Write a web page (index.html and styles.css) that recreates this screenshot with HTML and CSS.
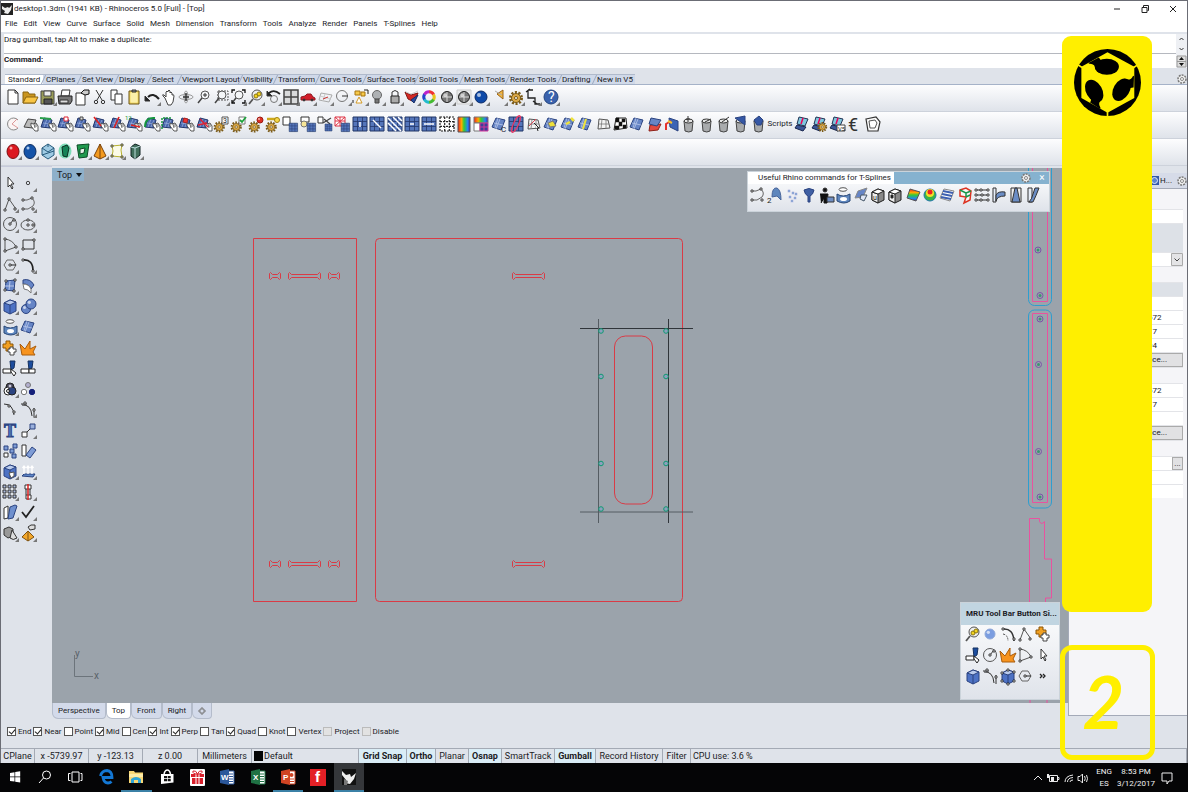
FILE: index.html
```html
<!DOCTYPE html>
<html lang="en">
<head>
<meta charset="utf-8">
<title>desktop1.3dm - Rhinoceros 5.0</title>
<link rel="stylesheet" href="styles.css">
</head>
<body>
<div class="app">
  <header class="titlebar">
    <svg class="app-icon" viewBox="0 0 12 12"><path d="M0 0h12v12H0z" fill="#222"/><path d="M1 3l3 2 3-1 1 1 3-3-1 5-3 4-4-1 1-2-3-2z" fill="#eee"/></svg>
    <h1 class="title">desktop1.3dm (1941 KB) - Rhinoceros 5.0 [Full] - [Top]</h1>
    <div class="win-buttons">
      <button type="button" aria-label="Minimize"><svg viewBox="0 0 10 10"><path d="M2 5h6" stroke="#222"/></svg></button>
      <button type="button" aria-label="Restore"><svg viewBox="0 0 10 10"><path d="M2 3.500h5v5h-5zM3.500 3V1.500h5v5H7.500" fill="none" stroke="#222"/></svg></button>
      <button type="button" aria-label="Close"><svg viewBox="0 0 10 10"><path d="M2 2l6 6M8 2l-6 6" stroke="#222"/></svg></button>
    </div>
  </header>
  <nav class="menu">
    <a href="#">File</a><a href="#">Edit</a><a href="#">View</a><a href="#">Curve</a><a href="#">Surface</a><a href="#">Solid</a><a href="#">Mesh</a><a href="#">Dimension</a><a href="#">Transform</a><a href="#">Tools</a><a href="#">Analyze</a><a href="#">Render</a><a href="#">Panels</a><a href="#">T-Splines</a><a href="#">Help</a>
  </nav>
  <section class="command">
    <div class="command-main">
      <p class="history">Drag gumball, tap Alt to make a duplicate:</p>
      <div class="prompt"><label for="cmd">Command:</label><input id="cmd" type="text"></div>
    </div>
    <svg class="command-scroll" viewBox="0 0 11 34"><path d="M0 0h11v34H0z" fill="#eef0f4"/><path d="M3.500 6l2-2 2 2M3.500 14l2 2 2-2" fill="none" stroke="#333"/><path d="M1 22h9v11H1z" fill="#ddd" stroke="#999"/><path d="M3 26h5l-2.500-3zM3 29h5l-2.500 3z" fill="#111"/><path d="M1 27.500h9" stroke="#999"/></svg>
  </section>
  <div class="tabstrip">
    <nav class="tool-tabs">
      <button type="button" class="active">Standard</button><button type="button">CPlanes</button><button type="button">Set View</button><button type="button">Display</button><button type="button">Select</button><button type="button">Viewport Layout</button><button type="button">Visibility</button><button type="button">Transform</button><button type="button">Curve Tools</button><button type="button">Surface Tools</button><button type="button">Solid Tools</button><button type="button">Mesh Tools</button><button type="button">Render Tools</button><button type="button">Drafting</button><button type="button">New in V5</button>
    </nav>
    <div class="tools" data-icons="cog"></div>
  </div>
  <div class="toolbar"><div class="tools n32" data-icons="new open save+ print props cut copy paste undo+ pan orbit zoom zoomwin+ zoomext+ zoomsel+ undoview+ four+ car+ cplane+ circ+ selpts+ bulb+ lock+ layer+ wheel+ ball+ ballgrid+ blueball+ spot+ gear+ dim+ help+"></div></div>
  <div class="toolbar">
    <div class="tools n44" data-icons="pie grayhand handgreen handsq hand handarrow handline hand12 handring handdash handdot handcross gear3 gearok gearred gearkey sqgrid bulbgrid cutgrid redgrid gridv griddiag gridhatch gridh gridhh griddots rainbow rainbowgrid patchc gridoval wirered patchy patchyy patchyl wire checker patch patchred brush bucket bucket2 bucket3 bucketb bucketd"></div>
    <button type="button" class="scripts">Scripts</button>
    <div class="tools n5" data-icons="laptop laptopgear laptopv euro penta"></div>
  </div>
  <div class="toolbar"><div class="tools n8" data-icons="eggred+ eggblue+ hexa+ greenglow+ greenbox+ cone+ yellowsq+ cyl+"></div></div>

  <main class="main">
    <aside class="palette">
      <div class="tools two" data-icons="arrow point+ polyline+ curve+ circle+ ellipse+ arc+ rect+ polygon+ fillet+ surf+ sweep+ box+ spheres+ tube+ patch2+ puzzle boom trim split group+ ungroup arcpt blend+ text move+ array join boxhole+ extrude+ nine+ align+ fold+ check+ solids+ pyramid+"></div>
    </aside>
    <div class="center">
      <div class="viewport">
        <svg class="drawing">
          <defs>
            <path id="slot" d="M1.500 .500l2 2h26l2-2 1 1v5l-1 1-2-2h-26l-2 2-1-1v-5z"/>
            <path id="knot" d="M1.500 .500l2 2h5l2-2 1 1v5l-1 1-2-2h-5l-2 2-1-1v-5z"/>
            <g id="pin"><circle r="3" fill="none" stroke="#7b55a8"/><circle r="1.500" fill="#3a9470"/></g>
            <circle id="dot" r="2.300" fill="#8d9fbd" stroke="#0e9b72"/>
          </defs>
          <g transform="translate(-52 -168)">
            <g fill="none" stroke="#d93b46">
              <path d="M253.500 238.500h103v363h-103z"/>
              <rect x="375.500" y="238.500" width="307" height="363" rx="4"/>
              <rect x="614.500" y="336" width="38" height="168" rx="11"/>
              <use href="#knot" x="269" y="272"/><use href="#slot" x="288" y="272"/><use href="#knot" x="328" y="272"/><use href="#slot" x="512" y="272"/>
              <use href="#knot" x="269" y="560"/><use href="#slot" x="288" y="560"/><use href="#knot" x="328" y="560"/><use href="#slot" x="512" y="560"/>
            </g>
            <path d="M580 328.500h113M668.500 319v204" stroke="#30353a" fill="none"/>
            <path d="M580 512h113M598.500 319v204" stroke="#555c62" fill="none"/>
            <use href="#dot" x="601" y="331"/><use href="#dot" x="601" y="376.500"/><use href="#dot" x="601" y="463.500"/><use href="#dot" x="601" y="509"/>
            <use href="#dot" x="666" y="331"/><use href="#dot" x="666" y="376.500"/><use href="#dot" x="666" y="463.500"/><use href="#dot" x="666" y="509"/>
            <g fill="none" stroke="#2d9ed0"><rect x="1028.500" y="150" width="23" height="155.500" rx="6"/><rect x="1028.500" y="310" width="23" height="198" rx="6"/></g>
            <path fill="none" stroke="#e8529f" d="M1032.500 168v133.500h15V168M1032.500 313.500h15v189h-15zM1029.500 620V518.500h10v3q2 4 5 0V559h7v39h-6v20M1030 700v4M1047 700v4"/>
            <use href="#pin" x="1038" y="250"/><use href="#pin" x="1040" y="295.500"/><use href="#pin" x="1040" y="319"/><use href="#pin" x="1038.500" y="364.500"/><use href="#pin" x="1038.500" y="451.500"/><use href="#pin" x="1040" y="497"/>
            <path d="M74.500 655v21.500H93" fill="none" stroke="#6c747b"/>
            <text class="axis" x="75" y="657">y</text><text class="axis" x="94" y="679">x</text>
          </g>
        </svg>
        <button type="button" class="view-label">Top<span></span></button>
        <section class="float splines">
          <header><h2>Useful Rhino commands for T-Splines</h2><div class="tools" data-icons="cog"></div><button type="button" class="close" aria-label="Close toolbar">×</button></header>
          <div class="tools n17" data-icons="curve arch2 drops funnel worker tube sheet cubea cubeb heat heatball stripes redcube rows bend taper flow"></div>
        </section>
        <section class="float mru">
          <header><h2>MRU Tool Bar Button Si...</h2></header>
          <div class="tools n5" data-icons="zoomsel softball blendm polyline puzzle trim circle boom arc arrow box blend boxpts polygon more"></div>
        </section>
      </div>
      <nav class="view-tabs"><button type="button">Perspective</button><button type="button" class="active">Top</button><button type="button">Front</button><button type="button">Right</button><button type="button" aria-label="Add view"><svg viewBox="0 0 8 8"><path d="M3 1h2v2h2v2H5v2H3V5H1V3h2z" fill="none" stroke="#777"/></svg></button></nav>
    </div>
    <aside class="panel">
      <div class="panel-tab"><svg viewBox="0 0 9 9"><path d="M0 0h9v9H0z" fill="#3459a8"/><circle cx="4.500" cy="4.500" r="3" fill="#5d83cd" stroke="#dfe8f8"/></svg><span>H...</span><div class="tools" data-icons="cog"></div></div>
      <div class="props">
        <div class="sub"></div>
        <div class="val"></div>
        <div class="head tall"></div>
        <div class="pick"><select aria-label="Projection"><option></option></select><svg viewBox="0 0 12 13"><path d="M.500.500h11v12H.500z" fill="#e4e4e6" stroke="#aaa"/><path d="M3.500 5.500L6 8l2.500-2.500" fill="none" stroke="#444"/></svg></div>
        <div class="sub"></div>
        <div class="head"></div>
        <div class="val"></div>
        <div class="val">672</div>
        <div class="val">17</div>
        <div class="val">94</div>
        <button type="button" class="place">Place...</button>
        <div class="sub"></div>
        <div class="val">672</div>
        <div class="val">17</div>
        <div class="val"></div>
        <button type="button" class="place">Place...</button>
        <div class="sub"></div>
        <div class="val file"><button type="button">...</button></div>
        <div class="val"></div>
        <div class="val"></div>
      </div>
    </aside>
  </main>

  <form class="osnap">
    <label><input type="checkbox" checked>End</label><label><input type="checkbox" checked>Near</label><label><input type="checkbox">Point</label><label><input type="checkbox" checked>Mid</label><label><input type="checkbox">Cen</label><label><input type="checkbox" checked>Int</label><label><input type="checkbox" checked>Perp</label><label><input type="checkbox">Tan</label><label><input type="checkbox" checked>Quad</label><label><input type="checkbox">Knot</label><label><input type="checkbox">Vertex</label><label><input type="checkbox" disabled>Project</label><label><input type="checkbox" disabled>Disable</label>
  </form>
  <footer class="status">
    <span>CPlane</span><span>x -5739.97</span><span>y -123.13</span><span>z 0.00</span><span>Millimeters</span><span class="layer"><i></i>Default</span><button type="button" class="on">Grid Snap</button><button type="button" class="on">Ortho</button><button type="button">Planar</button><button type="button" class="on">Osnap</button><button type="button">SmartTrack</button><button type="button" class="on">Gumball</button><button type="button">Record History</button><button type="button">Filter</button><span class="cpu">CPU use: 3.6 %</span>
  </footer>
  <footer class="taskbar">
    <div class="task-icons">
      <button type="button" aria-label="Start"><svg viewBox="0 0 20 20"><path d="M5 6l4.500-.8v4.300H5zM10.200 5l5-.8v5.300h-5zM5 10.300h4.500v4.300L5 14zM10.200 10.300h5v5.300l-5-.8z" fill="#fff"/></svg></button>
      <button type="button" aria-label="Search"><svg viewBox="0 0 20 20"><circle cx="11.500" cy="8" r="4" fill="none" stroke="#fff"/><path d="M8.500 11L4 16" stroke="#fff"/></svg></button>
      <button type="button" aria-label="Task view"><svg viewBox="0 0 20 20"><path d="M6 5h7v10H6zM4.500 6.500h-2v7h2M14.500 6.500h1.500v7h-1.500" fill="none" stroke="#fff"/></svg></button>
      <button type="button" aria-label="Edge"><svg viewBox="0 0 20 20"><path d="M4.500 9Q6 3.500 11 3.500Q16 4 16 10.500H7Q8 16 12 16Q14 16 15.500 14.500" fill="none" stroke="#1377d4" stroke-width="2.800"/></svg></button>
      <button type="button" aria-label="Explorer" class="open"><svg viewBox="0 0 20 20"><path d="M3 4h5l1 1.500h8V16H3z" fill="#f8d775"/><path d="M3 7h14v3H3z" fill="#fdeba7"/><path d="M5 16v-4q5-4 10 0v4h-3v-3H8v3z" fill="#2fa5d8"/></svg></button>
      <button type="button" aria-label="Store"><svg viewBox="0 0 20 20"><path d="M4 7h12.500v8.500L4 17z" fill="#fff"/><path d="M7 7q1-4 3.300-4T13.500 7" fill="none" stroke="#fff" stroke-width="1.500"/><path d="M7 9h3v2.300H7zM10.700 9h3v2.300h-3zM7 12h3v2.300H7zM10.700 12h3v2.300h-3z" fill="#111"/></svg></button>
      <button type="button" aria-label="Gifts"><svg viewBox="0 0 20 20"><rect x="3" y="2" width="15" height="17" rx="1" fill="#fff"/><path d="M4 7h13v3H4zM5 11h11v6H5z" fill="#d9202c"/><path d="M9 7v10M12 7v10" stroke="#fff"/><path d="M10.500 7Q5 7 6 4Q9 3 10.500 7Q12 3 15 4Q16 7 10.500 7" fill="none" stroke="#d9202c"/></svg></button>
      <button type="button" aria-label="Word"><svg viewBox="0 0 20 20"><path d="M11 4h6v13h-6z" fill="#fff" stroke="#2b579a"/><path d="M12 7h4M12 9.500h4M12 12h4M12 14.500h4" stroke="#2b579a"/><path d="M3 4l9-2v16l-9-2z" fill="#2b579a"/><text x="4" y="13">W</text></svg></button>
      <button type="button" aria-label="Excel"><svg viewBox="0 0 20 20"><path d="M11 4h6v13h-6z" fill="#fff" stroke="#1f7244"/><path d="M12 7h4M12 9.500h4M12 12h4M12 14.500h4" stroke="#1f7244"/><path d="M3 4l9-2v16l-9-2z" fill="#1f7244"/><text x="5" y="13">X</text></svg></button>
      <button type="button" aria-label="PowerPoint" class="open"><svg viewBox="0 0 20 20"><path d="M11 4h6v13h-6z" fill="#fff" stroke="#d04423"/><circle cx="13.500" cy="8" r="2" fill="#d04423"/><path d="M12 12h4M12 14.500h4" stroke="#d04423"/><path d="M3 4l9-2v16l-9-2z" fill="#d04423"/><text x="5" y="13">P</text></svg></button>
      <button type="button" aria-label="Flash"><svg viewBox="0 0 20 20"><path d="M2 2h16v17H2z" fill="#e32026"/><text class="big" x="7" y="15">f</text></svg></button>
      <button type="button" aria-label="Rhinoceros" class="open current"><svg viewBox="0 0 20 20"><path d="M3 2h14v16H3z" fill="#111"/><path d="M3 4l4 4 4-1 1 3 5-4-2 6-4 5-5-1 1-3-4-5z" fill="#eee"/><path d="M5 12l4 2-1 4H5z" fill="#777"/></svg></button>
    </div>
    <div class="tray">
      <svg viewBox="0 0 60 16"><g fill="none" stroke="#e8e8e8"><path d="M3 10l4-4 4 4"/><path d="M18.500 5.500h8v6h-8zM27 7.500h1v2h-1" /><path d="M34 12q0-6 8-7M36.500 12q0-4 5.500-4.500M39 12q0-2 3-2"/><path d="M47 6.500h2l2.500-2.500v9L49 10.500h-2zM53.500 6q1.500 2.500 0 5M55.500 5q2 3.500 0 7"/></g><path d="M20 7h3v4h-3zM16 4h2v4h-2z" fill="#eee"/></svg>
      <span>ENG<br>ES</span><span>8:53 PM<br>3/12/2017</span>
      <svg class="note" viewBox="0 0 14 16"><path d="M2 3h10v8H9l-2 3v-3H2z" fill="none" stroke="#eee"/></svg>
    </div>
  </footer>

  <aside class="banner">
    <svg viewBox="0 0 200 200" role="img" aria-label="Fab Lab">
      <defs><g id="third"><ellipse cx="98" cy="53" rx="36" ry="24"/><path d="M44 41L74 25Q80 36 88 32L64 62Q64 42 44 44z"/></g></defs>
      <circle cx="100" cy="100" r="100"/>
      <path class="hex" d="M100 10L180 53v93l-80 44-78-44V53z"/>
      <path class="gap" d="M24 55L10 46M178 55l14-9M100 188v14"/>
      <use href="#third"/><use href="#third" transform="rotate(120 100 100)"/><use href="#third" transform="rotate(240 100 100)"/>
    </svg>
  </aside>
  <div class="step">2</div>
</div>
<script src="icons.js"></script>
</body>
</html>
```
FILE: styles.css
```css
* { box-sizing: border-box; }
body { margin: 0; font: 8px/12px Roboto, "Liberation Sans", Arial, sans-serif; color: #1b1b1f; background: #dfe3ea; }
button { font: inherit; color: inherit; border: 0; padding: 0; background: none; }
h1, h2, p { margin: 0; font: inherit; }
svg { display: block; }
a { color: inherit; text-decoration: none; }

.app { position: relative; display: flex; flex-direction: column; min-height: 100vh; border: solid #6b6d75; border-width: 1px 1px 0; }
.titlebar { display: flex; align-items: center; height: 15px; background: #fff; }
.app-icon { width: 12px; height: 12px; margin-right: 1px; }
.title { flex: 1; }
.win-buttons { display: flex; gap: 18px; padding-right: 9px; }
.win-buttons svg { width: 10px; height: 10px; }
.menu { display: flex; gap: 6px; height: 16px; padding: 2px 4px; background: #fff; }

.command { display: flex; margin: 2px 0 6px 3px; height: 34px; background: #fff; }
.command-main { flex: 1; }
.history { height: 20px; border-bottom: 1px solid #b5b8bf; }
.prompt { display: flex; font-weight: bold; }
.prompt input { flex: 1; border: 0; outline: 0; padding: 0; font: inherit; min-width: 0; }
.command-scroll { width: 11px; height: 34px; }

.tabstrip { display: flex; justify-content: space-between; align-items: center; height: 11px; padding-left: 4px; border-bottom: 1px solid #a5b2c8; }
.tool-tabs { display: grid; grid-template-columns: 38px 36px 37px 33px 30px 61px 35px 42px 47px 52px 45px 46px 52px 35px 41px; }
.tool-tabs button { height: 10px; line-height: 10px; white-space: nowrap; background: #d0d9e9; border-top: 1px solid #b0bacb; text-align: left; padding-left: 3px; position: relative; }
.tool-tabs button + button::before { content: ""; position: absolute; left: 0; top: 0; height: 9px; border-left: 1px solid #9ba9c0; transform: skewX(-25deg); }
.tool-tabs .active { background: #fff; }

.toolbar { display: flex; align-items: center; height: 27px; padding: 0 3px 2px; background: linear-gradient(#fdfdfe, #dfe3ea); border-bottom: 1px solid #cdd2db; }
.tools { display: grid; }
.tools button { display: block; height: 18px; min-width: 0; }
.tools svg { width: 18px; height: 18px; overflow: visible; }
.n32 { width: 555px; grid-template-columns: repeat(32, minmax(0, 1fr)); }
.n44 { width: 763px; grid-template-columns: repeat(44, minmax(0, 1fr)); }
.n17 { width: 294px; grid-template-columns: repeat(17, minmax(0, 1fr)); }
.n8 { width: 139px; grid-template-columns: repeat(8, minmax(0, 1fr)); }
.n5 { width: 87px; grid-template-columns: repeat(5, minmax(0, 1fr)); }
.scripts { width: 26px; }

.main { display: flex; flex: 1; }
.palette { width: 51px; padding-top: 7px; border-top: 1px solid #c7cbdc; }
.two { grid-template-columns: 18px 18px; height: 368px; align-content: space-between; }
.center { flex: 1; display: flex; flex-direction: column; min-width: 0; padding-top: 2px; }
.viewport { position: relative; flex: 1; overflow: hidden; background: #9ba3ab; }
.drawing { position: absolute; width: 100%; height: 100%; }
.axis { font-size: 10px; fill: #59616a; }
.view-label { position: absolute; display: flex; align-items: center; left: 0; top: 0; padding: 0 2px 0 5px; height: 13px; background: #8eb0ca; gap: 4px; font-size: 9px; }
.view-label span { border: 3px solid transparent; border-top: 4px solid #111; border-bottom: 0; }
.float { position: absolute; background: linear-gradient(#fff, #dfe3ea); border: 1px solid #cbd3da; }
.float header { display: flex; align-items: center; background: #86b2cf; }
.splines { right: 18px; top: 3px; width: 303px; height: 41px; }
.splines header { height: 12px; }
.splines h2 { background: #fff; padding: 0 3px 0 10px; margin-right: auto; }
.splines > .tools { padding-top: 2px; }
.close { color: #fff; width: 14px; font-size: 10px; }
.mru { right: 8px; top: 434px; width: 100px; height: 98px; }
.mru header { height: 22px; padding-left: 5px; background: #c1d5e1; font-weight: bold; white-space: nowrap; }
.mru .tools { margin-left: 3px; row-gap: 3px; }

.view-tabs { display: flex; height: 18px; }
.view-tabs button { height: 16px; padding: 0 5px; background: #d3daea; border: 1px solid #b4bccb; border-top: 0; border-radius: 0 0 4px 6px; }
.view-tabs .active { background: #fff; }
.view-tabs svg { width: 8px; height: 8px; }

.panel { width: 119px; display: flex; flex-direction: column; margin: 7px 0 5px; background: #f5f5f8; border: solid #a4aab8; border-width: 0 0 1px 1px; }
.panel-tab { display: flex; justify-content: flex-end; align-items: center; height: 16px; background: #d6dbe8; border-bottom: 1px solid #a4aab8; gap: 1px; }
.panel-tab > svg { width: 9px; height: 9px; }
.panel-tab .tools, .tabstrip > .tools { width: 14px; }
.props { display: grid; gap: 1px; margin: 5px 4px 0 0; background: #e3e4e8; line-height: 13px; }
.sub { background: #f5f5f8; height: 15px; }
.val { background: #fff; padding-left: 79px; height: 13px; }
.head { background: #dde1e7; height: 13px; }
.tall { height: 28px; }
.pick { display: flex; height: 13px; background: #fff; }
.pick select { flex: 1; appearance: none; border: 0; background: #fff; padding: 0; min-width: 0; font: inherit; }
.pick svg { width: 12px; height: 13px; }
.place { background: #e1e1e3; border: 1px solid #aaa; height: 14px; text-align: right; padding-right: 15px; line-height: 10px; }
.file { display: flex; justify-content: flex-end; }
.file button { width: 11px; background: #e1e1e3; border: 1px solid #aaa; line-height: 10px; }

.osnap { display: flex; gap: 2px; height: 27px; align-items: center; padding: 0 6px 6px; }
.osnap label { display: flex; align-items: center; gap: 2px; }
.osnap input { appearance: none; position: relative; width: 9px; height: 9px; margin: 0; background: #fff; border: 1px solid #555; }
.osnap input:checked::after { content: ""; position: absolute; left: 2px; top: 0; width: 3px; height: 5px; border: solid #222; border-width: 0 1px 1px 0; transform: rotate(40deg); }
.osnap input:disabled { background: #e2e2e2; border-color: #bbb; }

.status { display: grid; grid-template-columns: 34px 54px 54px 55px 54px 107px 48px 29px 33px 33px 53px 41px 67px 28px 1fr; height: 15px; border-top: 1px solid #a4aab5; line-height: 14px; text-align: center; white-space: nowrap; font-size: 9px; }
.status > * { border-right: 1px solid #a4aab5; }
.status .on { background: #daedf6; font-weight: bold; }
.status .layer, .status .cpu { text-align: left; padding-left: 2px; display: flex; align-items: center; gap: 1px; }
.layer i { width: 9px; height: 10px; background: #050505; }

.taskbar { display: flex; justify-content: space-between; height: 29px; margin: 0 -1px; background: #050506; color: #f2f2f2; }
.task-icons { display: grid; grid-template-columns: repeat(12, 1fr); width: 364px; }
.task-icons button { display: grid; place-items: center; border-bottom: 2px solid transparent; }
.task-icons svg { width: 20px; height: 20px; }
.task-icons .open { border-color: #3b81a6; }
.task-icons .current { background: #35373a; }
.task-icons text { font: bold 8px "Liberation Sans", sans-serif; fill: #fff; }
.task-icons .big { font-size: 15px; }
.tray { display: flex; align-items: center; gap: 5px; padding-right: 14px; text-align: center; }
.tray > svg { width: 60px; height: 16px; }
.tray .note { width: 14px; }

.banner { position: absolute; right: 35px; top: 35px; width: 90px; height: 576px; border-radius: 9px; background: #ffef00; padding: 13px 12px; }
.banner svg { width: 67px; }
.hex { fill: #ffef00; }
.gap { stroke: #ffef00; stroke-width: 5; }
.step { position: absolute; right: 32px; top: 644px; width: 95px; height: 115px; border: 5px solid #ffef00; border-radius: 12px; display: grid; place-items: center; color: #ffef00; font: italic 700 72px/96px Lato, "Open Sans", sans-serif; padding: 0 8px 4px 0; }
```
FILE: icons.js
```js
const path = (d, fill = 'none', stroke = '#333', w = 1) =>
  `<path d="${d}" fill="${fill}" stroke="${stroke}" stroke-width="${w}"/>`;
const dot = (x, y, r, fill, stroke = '#333') =>
  `<circle cx="${x}" cy="${y}" r="${r}" fill="${fill}" stroke="${stroke}"/>`;
const text = (x, y, s, fill = '#222', size = 8) =>
  `<text x="${x}" y="${y}" fill="${fill}" font-size="${size}">${s}</text>`;
const nodes = (...pts) => pts.map(([x, y]) => path(`M${x - 1} ${y - 1}h2v2h-2z`, '#fff', '#222', .8)).join('');

const BLUE = '#6685c6';
const NAVY = '#2b4380';
const patch = path('M6 3l9 2-4 10-9-3z', BLUE, NAVY) + path('M4 8l9 2M10 4l-4 10M8 3l-3 10', 'none', '#b9c8ea', .8);
const hand = path('M10 8l2 1 3-1 2 3v5h-3l-4-5z', '#fff', '#333', .8) + path('M13 9l1 4M15 9v3', 'none', '#444', .8);
const patchHand = path('M5 3l8 2-2 8-9-1z', '#4a68ae', '#24376b') + path('M4 8l8 1M8 4l-3 8M11 5L8 12', 'none', '#9fb3df', .7) + hand;
const blueGrid = path('M2 2h14v14H2z', '#5475ba', '#203767') + path('M6.500 2v14M11.500 2v14M2 6.500h14M2 11.500h14', 'none', '#24376b', .8);
const gear = '<circle cx="9" cy="10" r="5.500" fill="none" stroke="#7a5a18" stroke-width="3" stroke-dasharray="2 1.450"/>' + dot(9, 10, 4.5, '#dba845', '#7a5a18') + dot(9, 10, 1.5, '#fff', '#7a5a18');
const lens = dot(10, 7, 4, '#f4f6f8', '#555') + path('M7 10L3 15', 'none', '#444', 1.5);
const bucket = path('M4 6l1 10q4 2 7 0l1-10z', '#a9abad', '#444') + '<ellipse cx="8.500" cy="6" rx="4.500" ry="2" fill="#e5e5e5" stroke="#333"/>';
const box = path('M3 6l6-3 6 2v9l-6 3-6-3z', '#4d72c4', NAVY) + path('M3 6l6 2 6-3-6-2z', '#b9cbed', NAVY) + path('M9 8v9', 'none', NAVY);
const gray = path('M3 6l6-3 6 2v9l-6 3-6-3z', '#888', '#222') + path('M3 6l6 2v9l-6-3z', '#eee', '#222') + path('M3 6l6 2 6-3-6-2z', '#fff', '#222');
const laptop = path('M6 2l9 2-3 7-8-2z', '#7fc7de', '#235') + path('M4 10l9 2-3 4-8-3z', '#3c5696', '#17264e') + path('M10 3L8 9', 'none', '#e05', 1.5);
const rainbowFill = (id, dir) => `<linearGradient id="${id}" x2="${dir ? 0 : 1}" y2="${dir ? 1 : 0}"><stop stop-color="#e22"/><stop offset=".3" stop-color="#fa0"/><stop offset=".5" stop-color="#3c3"/><stop offset=".8" stop-color="#28e"/><stop offset="1" stop-color="#42a"/></linearGradient>`;
const cutter = path('M9 2h5l-1 7-3 2z', '#1c4d9e', '#14305f') + path('M2 10h8v4H2z', '#fff', '#222');
const wire = path('M5 4l9 1 2 8-12 1z', '#f4f4f4', '#555') + path('M4 9l11 0M8 4l-1 10M12 4v9', 'none', '#777', .8);
const ball = (x, y, r, base, edge) => dot(x, y, r, base, edge) + `<circle cx="${x - r / 3}" cy="${y - r / 3}" r="${r / 3}" fill="#fff" opacity=".65"/>`;
const small = (shape, x, y, k) => `<g transform="translate(${x} ${y}) scale(${k})">${shape}</g>`;

const icons = {
  cog: '<circle cx="9" cy="9" r="4" fill="#eee" stroke="#777" stroke-width="1.500" stroke-dasharray="2 1"/>' + dot(9, 9, 1.5, '#fff', '#888'),
  new: path('M4 2h7l3 3v11H4z', '#fff') + path('M11 2v3h3'),
  open: path('M2 4h5l1 2h6v9H2z', '#c9951f', '#8a6410') + path('M2 15l3-6h12l-3 6z', '#f8c545', '#8a6410'),
  save: path('M2 3h13v13H2z', '#999c58', '#444') + path('M5 3h7v5H5z', '#eee', '#444') + path('M5 11h8v5H5z', '#555', '#222'),
  print: path('M5 8l1-6h8l-1 6z', '#fff') + path('M2 8h14v5l-2 3H3z', '#777', '#222') + path('M4 12h8v3H4z', '#ddd'),
  props: path('M3 5h9v12H3z', '#fff') + path('M8 5l3-3h5v4l-4 1z', '#ccc', '#111'),
  cut: path('M5 2l6 10M12 2L6 12') + dot(5, 14, 1.7, 'none') + dot(12, 14, 1.7, 'none'),
  copy: path('M3 2h6v10H3z', '#fff') + path('M7 6h7v10H7z', '#fff'),
  paste: path('M4 3h10v13H4z', '#f3d969', '#6b5313') + path('M6 5h6v9H6z', '#fbefaa', '#fbefaa') + path('M7 2h4v2H7z', '#888'),
  undo: path('M5 9q5-5 11 2', 'none', '#222', 2) + path('M2 8v5h5z', '#222'),
  pan: path('M5 10L3 8q-1-2 1-1l2 2V4q1-2 2 0V3q1-2 2 0v2q1-2 2 0v2q2-1 2 1l-1 6-2 3H8z', '#fff', '#444'),
  orbit: '<ellipse cx="9" cy="9" rx="7" ry="2.500" fill="none" stroke="#999"/><ellipse cx="9" cy="9" rx="2" ry="6" fill="none" stroke="#999"/>' + path('M9 5v8M6 9h6', 'none', '#333', 1.5),
  zoom: lens + path('M8 7h4M10 5v4'),
  zoomwin: '<rect x="6" y="3" width="10" height="9" fill="none" stroke="#555" stroke-dasharray="2 1"/>' + lens,
  zoomext: lens + path('M3 5V2h3M13 2h3v3M16 12v3h-3M3 12v3h3', 'none', '#111', 1.3),
  zoomsel: dot(10, 7, 5, '#eee', '#555') + path('M6 11l-4 5', 'none', '#555', 1.8) + dot(9, 8, 2, '#f5d520', '#8a7510') + dot(12, 6, 2, '#f5d520', '#8a7510'),
  undoview: dot(10, 11, 3.5, 'none', '#777') + path('M5 5q5-4 11 1', 'none', '#222', 1.7) + path('M3 3v5h5z', '#222'),
  four: path('M2 2h14v14H2z', '#d9dadb', '#444', 1.5) + path('M9 2v14M2 9h14', 'none', '#444', 1.5),
  car: path('M2 9l4-1 2-2h4l2 3 2 1v2H2z', '#d31d2a', '#8f1a20') + dot(5, 12, 1, '#333') + dot(13, 12, 1, '#333'),
  cplane: path('M5 5l11 2-3 7-10-2z', 'none', '#aaa') + path('M4 8l11 3M9 6l-2 7', 'none', '#ccc') + path('M7 11l5-2', 'none', '#c33'),
  circ: dot(8, 8, 5.5, 'none', '#777') + path('M8 8h6'),
  selpts: path('M4 3h5v4H4zM10 4h4v4h-4z', '#f6c94a', '#a67510') + path('M5 15l3-6 3 6z', '#fff', '#d39a25') + path('M13 2h4v4M2 12v3', 'none', '#222'),
  bulb: dot(9, 7, 4.5, '#aeb1b4', '#666') + path('M7 11h4v4H7z', '#777', '#444'),
  lock: path('M6 8V4q3-3 6 0v4') + path('M5 8h8v7H5z', '#aaa', '#222'),
  layer: path('M2 4l6 3 7-2-4 9-6-3z', '#d42925', '#801712') + path('M8 12l7-5-4 8z', '#294ca0', '#183066') + path('M3 4l5 2 7-3', '#fff', '#ccc'),
  wheel: '<g fill="none" stroke-width="3" transform="rotate(-90 9 9)">' + ['#e33', '#e9c41c', '#4b3', '#2bc', '#24c', '#b2c'].map((c, i) => `<circle cx="9" cy="9" r="5.200" stroke="${c}" stroke-dasharray="5.500 40" transform="rotate(${i * 60} 9 9)"/>`).join('') + '</g>',
  ball: ball(9, 9, 5.5, '#777', '#222') + path('M9 4v10M4 9h10', 'none', '#eee', .8),
  ballgrid: path('M2 2h14v14H2z', '#e9eaeb', '#ccc') + ball(9, 9, 5.5, '#777', '#222') + path('M9 4v10M4 9h10', 'none', '#eee', .8),
  blueball: ball(9, 9, 6, '#0e49a8', '#0b2a66'),
  spot: path('M7 6l6-4v9z', '#f5b73e', '#99651a') + path('M5 3l7 4', 'none', '#aaa'),
  gear,
  dim: path('M4 2v8h7v6h5M4 2h5M2 4l4-3M9 13l4 3', 'none', '#222', 1.3),
  help: dot(9, 9, 7, '#3a62ad', '#23447f') + text(6, 14, '?', '#fff', 14),

  pie: path('M14 5A6 6 0 1 0 14 13', '#faf4f4', '#888') + path('M8 9L13 4M8 9l6 4', 'none', '#d99'),
  grayhand: path('M3 12l4-8 8 1-3 8z', '#bbb', '#444') + hand,
  hand: patchHand + path('M7 2h3v3H7z', '#ddd', '#444'),
  handgreen: patchHand + path('M1 3l11 1', 'none', '#2ba04b', 2),
  handsq: patchHand + path('M8 2h4v4H8z', '#fff', '#d23'),
  handarrow: patchHand + path('M3 2l7 9', 'none', '#d22', 1.6),
  handline: patchHand + path('M11 2L6 13', 'none', '#d22', 1.6),
  hand12: patchHand + text(0, 5, '12', '#2a9a40', 6) + path('M6 10l9 2', 'none', '#d22', 1.4),
  handring: patchHand + path('M2 12Q2 2 12 3', 'none', '#15953f', 2),
  handdash: patchHand + '<path d="M2 14V3h9" fill="none" stroke="#15953f" stroke-dasharray="2 1" stroke-width="1.500"/>',
  handdot: patchHand + path('M7 3l4 1-1 4-4-1z', '#e33', '#a22'),
  handcross: patchHand + path('M5 4l8 8M3 10l9-2', 'none', '#d23', 1.5),
  gear3: small(gear, 0, 4, .8) + path('M10 2h6v7h-6z', '#fff', '#555') + text(11, 8, '3', '#222', 7),
  gearok: small(gear, 0, 4, .8) + path('M10 2h6v7h-6z', '#fff', '#777') + path('M11 5l2 2 4-5', 'none', '#1ca23b', 1.8),
  gearred: small(gear, 0, 4, .8) + ball(13, 5, 3, '#df3023', '#9c1d15'),
  gearkey: small(gear, 0, 4, .8) + path('M3 4h10', 'none', '#cda81b', 2.5) + dot(13, 5, 2.5, '#f6d84b', '#a2820e'),
  sqgrid: path('M2 2h7v8H2z', '#fff') + small(blueGrid, 7, 7, .6),
  bulbgrid: path('M2 2h8v5H2z', '#fff') + dot(5, 9, 3, '#f6e598', '#777') + small(blueGrid, 7, 7, .6),
  cutgrid: path('M2 2h5v6H2z', '#fff') + path('M7 8l8-5M8 4l6 5', 'none', '#444', 1.3) + small(blueGrid, 8, 8, .5),
  redgrid: path('M2 2h10v9H2z', '#fff', '#d34') + path('M2 2l10 9M12 2L2 11M7 2v9M2 6h10', 'none', '#d34') + small(blueGrid, 7, 7, .6),
  gridv: blueGrid + path('M9 7v5', 'none', '#fff', 1.5),
  griddiag: blueGrid + path('M5 5l8 8', 'none', '#fff', 1.5),
  gridhatch: blueGrid + path('M2 8l8 8M2 3l13 13M7 2l9 9M12 2l4 4', 'none', '#fff', 1.5),
  gridh: blueGrid + path('M7 9h4', 'none', '#fff', 1.5),
  gridhh: blueGrid + path('M4 9h10', 'none', '#fff', 1.5),
  griddots: '<path d="M2 2h14v14H2zM6.700 2v14M11.300 2v14M2 6.700h14M2 11.300h14" fill="#fff" stroke="#222" stroke-width="1.200" stroke-dasharray="2 1"/>',
  rainbow: rainbowFill('rb1', 0) + path('M3 2h12v15H3z', 'url(#rb1)', '#555'),
  rainbowgrid: rainbowFill('rb2', 0) + path('M2 2h14v6H2z', 'url(#rb2)', '#777') + path('M2 8h6v8H2z', '#fff', '#777') + path('M8 8h8v8H8z', '#3b3f9a', '#d2349a') + path('M12 8v8M8 12h8', 'none', '#d2349a'),
  patchc: patch + text(11, 17, 'C', '#223', 8),
  gridoval: blueGrid + '<ellipse cx="9" cy="9" rx="2.500" ry="9" fill="none" stroke="#e13a68" stroke-width="1.300" transform="rotate(25 9 9)"/>',
  wirered: wire + path('M5 11l7-7', 'none', '#d45') + path('M10 8l5 5-2 0 1 3', '#fff', '#222'),
  patchy: patch + path('M6 8l5-2 3 5-6 1z', '#eee13a', '#777'),
  patchyy: patch + path('M7 9l4-2M12 3l3 3', 'none', '#efe23a', 2.5),
  patchyl: patch + path('M10 4l-3 10', 'none', '#efe23a', 2),
  wire,
  checker: '<path d="M5 3h10l1 10-13 2z" fill="#fff" stroke="#222"/>' + path('M5 3h3v4H5zM11 4h3v3h-3zM8 7h3v4H8zM4 11h4v3H4zM12 10h3v3h-3z', '#111', '#111', .5),
  patch,
  patchred: path('M4 10l11-1-3 6-9 1z', '#e14a42', '#8e2119') + path('M5 3l10 2-4 6-8-2z', BLUE, NAVY),
  brush: path('M6 3l9 3v10l-8-4z', '#3b63b5', NAVY) + path('M3 15V9l5-3', 'none', '#e5332b', 2) + path('M5 6l4 2', 'none', '#f0c22f', 2),
  bucket: bucket + path('M8 1v6M6 4h4'),
  bucket2: bucket + path('M7 7l6-3'),
  bucket3: bucket + path('M7 7l7-5'),
  bucketb: bucket + path('M3 3l10-2v9z', '#3557a5', NAVY),
  bucketd: bucket + path('M9 1l4 4-2 5H7L4 5z', '#3557a5', NAVY),
  laptop,
  laptopgear: laptop + small(gear, 6, 5, .7),
  laptopv: laptop + path('M9 10h8v6H9z', '#fff', '#444') + text(10, 16, 'V5', '#222', 6),
  euro: text(3, 16, '€', '#333', 18),
  penta: path('M3 4l10-2 4 5-2 9H5z', '#fafafa', '#333', 1.2) + path('M6 6l6-1 2 3-2 5H7z', '#fff', '#555'),

  eggred: '<ellipse cx="9" cy="9.500" rx="6" ry="7" fill="#dc1820" stroke="#7c1013"/>' + dot(7, 6, 1.5, '#f6a9a9', 'none'),
  eggblue: '<ellipse cx="9" cy="9.500" rx="6" ry="7" fill="#1553a8" stroke="#0b2c62"/>' + dot(7, 6, 1.5, '#aac8ee', 'none'),
  hexa: path('M9 2l6 4v7l-6 4-6-4V6z', '#9fcbe4', '#275a7b') + path('M3 6l6 4 6-4M3 13l12-4M9 2v3', 'none', '#275a7b'),
  greenglow: '<ellipse cx="9" cy="9" rx="6.500" ry="7.500" fill="#7fdcb8"/>' + path('M6 5l5-2 2 3-2 9-4-1z', '#168357', '#0a2e1f'),
  greenbox: path('M3 3l12-1-2 13-8 1z', '#219a4f', '#0b4b25') + path('M6 7l5-1-1 5-4 1z', '#e7f3ea', '#0b4b25'),
  cone: path('M9 2l6 12-6 3-6-3z', '#f39a1f', '#7b430a') + path('M9 2v15', 'none', '#7b430a'),
  yellowsq: path('M4 4l10-1-1 5 1 7-10-1 1-5z', '#fbfbe8', '#b7b12f') + path('M3 3h2v2H3zM13 2h2v2h-2zM3 13h2v2H3zM13 14h2v2h-2z', '#f2ea31', '#555'),
  cyl: path('M5 5l4-3 5 2v9l-5 4-4-3z', '#42705d', '#122') + path('M9 6v11M5 5l4 1 5-2', 'none', '#bdd'),

  arrow: path('M7 3v10l2-2 2 4 1-1-2-4h3z', '#fff', '#333'),
  point: dot(9, 9, 1.7, 'none', '#444'),
  polyline: path('M4 15L8 4l7 10', 'none', '#555') + nodes([4, 15], [8, 4], [14, 14]),
  curve: path('M4 5h4l5-2q4 4 1 8l-5 3H4', 'none', '#666') + nodes([4, 5], [13, 3], [4, 14], [14, 14]),
  circle: dot(9, 9, 6.5, 'none', '#555') + path('M9 9l4-5') + nodes([9, 9], [13, 5]),
  ellipse: '<ellipse cx="9" cy="10" rx="7" ry="5" fill="none" stroke="#555"/>' + nodes([9, 5], [9, 10], [14, 10]),
  arc: path('M4 15V3q8 1 11 8L4 15', 'none', '#555') + nodes([4, 3], [15, 11], [4, 15]),
  rect: path('M4 4h11v9H4z', 'none', '#333') + nodes([4, 13], [15, 4]),
  polygon: path('M6 4h6l3 5-3 5H6L3 9z', 'none', '#666') + path('M9 9h6', 'none', '#222') + nodes([9, 9]),
  fillet: path('M4 4q10-1 10 11', 'none', '#222', 1.7) + nodes([4, 4], [14, 15]),
  surf: path('M5 4l9-1-1 11-9-1z', BLUE, NAVY) + path('M9 4l-1 9M4 9h9', 'none', '#b9c8ea') + nodes([5, 4], [14, 3], [13, 14], [4, 13]),
  sweep: path('M4 3q7-2 11 5l-3 4q-2-5-8-5z', BLUE, NAVY) + path('M4 7q6 0 8 5v4q-3-4-7-4z', '#fff', '#777'),
  box,
  spheres: ball(7, 12, 4.5, BLUE, NAVY) + ball(12, 7, 5, BLUE, NAVY),
  tube: path('M3 8q6 4 13 0v7q-6 4-13 0z', '#5e86bd', '#274676') + '<ellipse cx="9" cy="3.500" rx="4" ry="1.800" fill="#fff" stroke="#555"/><ellipse cx="9.500" cy="13" rx="3.500" ry="2" fill="#fff"/>',
  patch2: patch,
  puzzle: path('M2 5h3V2h4v3h3v4H9v3H5V9H2z', '#f1a022', '#8b5709') + path('M7 10h2V8h3v2h3v3h-2v3H9v-3H7z', '#fff', '#444'),
  boom: path('M3 16L1 5l5 5 5-8 0 8 6-3-3 6 2 3z', '#f7931e', '#a85c0d'),
  trim: cutter + path('M10 10l5 4-2 3-3-4z', '#fff', '#222'),
  split: cutter + path('M10 10h6v4h-6z', '#fff', '#222'),
  group: dot(9, 7, 4, '#445', '#222') + dot(7, 11, 4, '#fff', '#222') + dot(11, 11, 4, NAVY, '#222') + dot(9, 6, 2, '#ccd', '#445') + dot(7, 11, 1.5, '#fff', '#222'),
  ungroup: dot(9, 5, 2.5, '#b3b0d0', '#777') + dot(5, 12, 2.7, '#fff', '#777') + dot(13, 12, 2.7, '#14207a', '#14207a'),
  arcpt: path('M3 4q9 0 10 11', 'none', '#333') + nodes([8, 6], [13, 12]),
  blend: path('M3 5q9-1 10 11M2 4h6M15 8v9', 'none', '#333') + nodes([6, 3], [15, 10]),
  blendm: path('M4 4q10-1 11 12', 'none', '#333', 1.5) + '<path d="M4 9q5 1 5 7" fill="none" stroke="#555" stroke-dasharray="2 1"/>' + nodes([4, 4], [15, 14]),
  text: `<text x="3" y="16" fill="#4d79c3" stroke="${NAVY}" font-size="18" font-weight="bold" font-family="Liberation Serif">T</text>`,
  move: path('M5 14l9-9') + path('M3 11h5v5H3z', '#fff') + path('M11 3h5v5h-5z', '#9ab0dc', NAVY),
  array: path('M3 4h4v4H3zM9 7h4v4H9zM12 2h4v4h-4zM11 12h4v4h-4z', '#7e9cd5', NAVY) + path('M3 11h4v4H3z', '#fff'),
  join: path('M3 3h4v11H3z', '#fff') + path('M13 5l4 3-6 8-4-3z', '#7e9cd5', NAVY),
  boxhole: box + path('M8 11l5-1v4l-3 2z', '#fff', '#555'),
  extrude: path('M3 14l2-2h11l-2 3z', '#5d87c8', NAVY) + path('M5 12V4M9 12V4M13 12V4M3.500 6L5 4l1.500 2M7.500 6L9 4l1.500 2M11.500 6L13 4l1.500 2', 'none', '#fff', 1.3),
  nine: path([3, 8, 13].flatMap(y => [3, 8, 13].map(x => `M${x - 1} ${y - 1}h3v3h-3z`)).join(''), '#aebde0', '#333'),
  align: path('M6 2h6v4H6zM7 12h5v4H7zM7 6v6M11 6v6', '#fff', '#333') + path('M9 1v16', 'none', '#d22', 1.5),
  fold: path('M3 5l4-2v12l-4 1z', '#fff') + path('M9 4l5-2 2 1-4 12-5 1z', '#6f90ce', NAVY),
  check: path('M3 9l4 5 8-11', 'none', '#222', 1.8),
  solids: path('M3 5l5-2 4 2v7l-5 2-4-3z', '#999', '#333') + path('M11 6l5 8q-4 3-7 0z', '#ddd', '#333'),
  pyramid: path('M9 7l6 6-6 4-6-4z', '#f2a62a', '#7e5210') + path('M9 7v10', 'none', '#7e5210') + path('M9 3l3-2h4v4l-5 1z', '#ddd', '#333'),

  arch2: path('M7 11Q7 1 12 2q4 2 4 12l-4-4z', '#5e86bd', '#48659a') + text(2, 17, '2'),
  drops: [[6, 5], [10, 7], [7, 11], [12, 12], [9, 15], [13, 8]].map(([x, y]) => dot(x, y, 1.5, '#6c90cc', '#dde')).join(''),
  funnel: path('M4 4q5-3 10 0-1 5-4 6v6H8v-6Q5 9 4 4z', '#3f5fa3', NAVY),
  worker: dot(8, 4, 2, '#111') + path('M3 8h8l-1 9H7v-5l-3 5', '#111', '#111') + path('M10 11h7v5h-7z', '#6f8ec4', '#333'),
  sheet: path('M6 5l9-3-4 9-8 1z', BLUE, '#888') + path('M9 9h6l-3 6-4-2z', '#dfe6f5', '#456'),
  cubea: gray + text(4, 14, 'u', '#222', 7),
  cubeb: gray + path('M5 9h2v3H5z', '#111'),
  heat: rainbowFill('rb3', 1) + path('M6 3l10 3-4 9-9-3z', 'url(#rb3)', '#555'),
  heatball: dot(9, 9, 6, '#39b34a', '#27a') + dot(9, 7, 4, '#f0e029', 'none') + dot(9, 6, 2.500, '#e22', 'none'),
  stripes: path('M6 3l10 2-4 10-10-3z', '#fff', '#888') + path('M5 5l10 2M4 8l10 2M3 11l10 2', 'none', '#3c5fb0', 1.8),
  redcube: path('M4 4l6-2 5 3-1 9-6 3 2-6-6-1z', '#f7f7f7', '#d32', 1.5) + path('M10 11l4-2M10 7l5-2M10 11V7L4 4', 'none', '#18974a', 1.5),
  rows: path('M3 4h12M3 9h12M3 14h12') + nodes([3, 4], [15, 4], [3, 9], [15, 9], [3, 14], [15, 14]) + nodes([8, 4], [9, 9], [8, 14]),
  bend: path('M3 2h3v14H3z', '#e7edf7', '#333') + path('M6 15q1-5 9-5V6Q8 5 6 9z', '#6b8dc5', '#333'),
  taper: path('M4 2h10v14H4z', '#eee', '#333') + path('M8 2h2l3 14H5z', '#6b8dc5', '#333'),
  flow: path('M3 2h4v14H3z', '#e7edf7', '#333') + path('M4 16q3-3 4-8l2-6h4q-3 8-6 14z', '#6b8dc5', '#333'),
  softball: ball(9, 9, 5, '#7b9de0', '#8fa8d8'),
  boxpts: box + nodes([3, 6], [9, 3], [15, 5], [15, 14], [9, 17], [3, 14]),
  more: path('M6 7l2 2-2 2M9 7l2 2-2 2', 'none', '#222', 1.3)
};

document.querySelectorAll('[data-icons]').forEach(holder => {
  holder.innerHTML = holder.dataset.icons.split(' ').map(item => {
    const name = item.replace('+', '');
    const flyout = item.endsWith('+') ? '<path d="M18 14v4h-4z" fill="#777"/>' : '';
    return `<button type="button" aria-label="${name}"><svg viewBox="0 0 18 18">${icons[name]}${flyout}</svg></button>`;
  }).join('');
});
```
